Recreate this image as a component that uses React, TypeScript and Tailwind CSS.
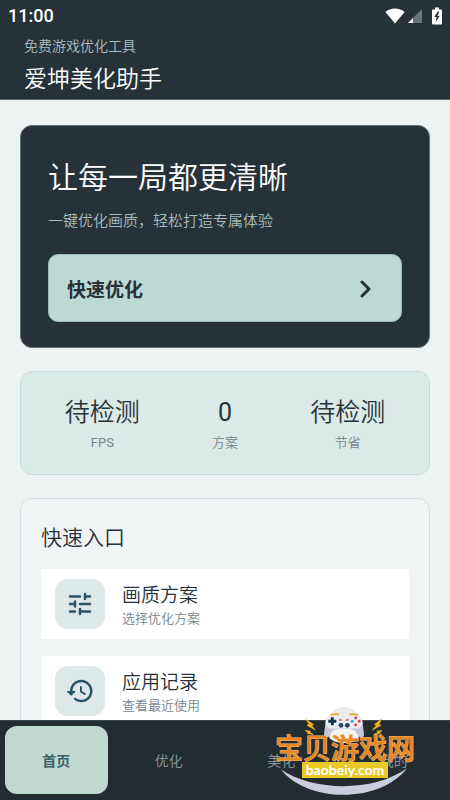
import type { ReactNode } from "react";

const stats = [
  { value: "待检测", label: "FPS", valueWeight: "font-[350]", labelWeight: "font-normal" },
  { value: "0", label: "方案", valueWeight: "font-normal", labelWeight: "font-[350]" },
  { value: "待检测", label: "节省", valueWeight: "font-[350]", labelWeight: "font-[350]" },
];

const tabs = ["首页", "优化", "美化", "我的"];

function WifiIcon() {
  return (
    <svg className="h-4 w-5" viewBox="0 0 20 16" aria-hidden="true">
      <path d="M10 15.5 0.4 4C3 1.7 6.3 0.5 10 0.5S17 1.7 19.6 4Z" fill="#fff" />
    </svg>
  );
}

function SignalIcon() {
  return (
    <svg className="h-4 w-4" viewBox="0 0 16 16" aria-hidden="true">
      <path d="M15 1v14H1Z" fill="#67747a" />
      <path d="M6 10v5H1Z" fill="#fff" />
    </svg>
  );
}

function BatteryIcon() {
  return (
    <svg className="h-[18px] w-[10px]" viewBox="0 0 10 18" aria-hidden="true">
      <path d="M3 0.5h4v2h2q1 0 1 1v13q0 1-1 1H1q-1 0-1-1v-13q0-1 1-1h2Z" fill="#fff" />
      <path d="M5.6 4.6 2.4 10h2.2l-.8 5L7.6 9H5.4l1.8-4.4Z" fill="#263238" />
    </svg>
  );
}

function TuneIcon() {
  return (
    <svg className="size-[30px]" viewBox="0 0 24 24" fill="none" stroke="currentColor" strokeWidth="2" strokeLinecap="round" aria-hidden="true">
      <path d="M4 6h8M16 4v4M16 6h4M4 12h4M8 10v4M12 12h8M4 18h4M12 16v4M12 18h8" />
    </svg>
  );
}

function HistoryIcon() {
  return (
    <svg className="size-[30px]" viewBox="0 0 24 24" fill="currentColor" aria-hidden="true">
      <path d="M13.26 3C8.17 2.86 4 6.95 4 12H2.21c-.45 0-.67.54-.35.85l2.79 2.8c.2.2.51.2.71 0l2.79-2.8c.31-.31.09-.85-.36-.85H6c0-3.9 3.18-7.05 7.1-7 3.72.05 6.85 3.18 6.9 6.9.05 3.91-3.1 7.1-7 7.1-1.61 0-3.1-.55-4.28-1.48-.4-.31-.96-.28-1.32.08-.42.42-.39 1.13.08 1.49C9 20.29 10.91 21 13 21c5.05 0 9.14-4.17 9-9.26-.13-4.69-4.05-8.61-8.74-8.74zm-.51 5c-.41 0-.75.34-.75.75v3.68c0 .35.19.68.49.86l3.12 1.85c.36.21.82.09 1.03-.26.21-.36.09-.82-.26-1.03l-2.88-1.71v-3.4c0-.4-.34-.74-.75-.74z" />
    </svg>
  );
}

function Entry({ icon, title, note }: { icon: ReactNode; title: string; note: string }) {
  return (
    <button type="button" className="flex h-[70px] w-full shrink-0 items-center gap-[17px] bg-white px-3.5 text-left">
      <span className="flex size-[50px] items-center justify-center rounded-[13px] bg-[#dce9e8] text-[#2a5464]">{icon}</span>
      <span className="flex flex-col pt-[2px]">
        <span className="text-[19px] leading-7 font-[350] text-[#263238]">{title}</span>
        <span className="text-[13px] leading-[18px] font-[350] text-[#77858b]">{note}</span>
      </span>
    </button>
  );
}

function ControllerLogo() {
  return (
    <svg className="block w-full" viewBox="0 0 138 92" aria-hidden="true">
      <circle cx="68" cy="19.500" r="16.500" fill="#ececec" />
      <ellipse cx="68" cy="32" rx="15" ry="7" fill="#f3f3f4" />
      <path d="M54 12.500q14-2.500 28 0 4 1 4.500 6L88 30q0 3.500-2.500 3.500T81 29.500Q79 25 74 25H62q-5 0-7 4.500-2 4-4.500 4T48 30l1.500-11.500q.5-5 4.500-6Z" fill="#c4c7d6" />
      <path d="M54 12q14-2.500 28 0 4 1 4.500 6 0 4-3.500 6.500H53q-3.500-2.500-3.500-6.500.5-5 4.500-6Z" fill="#ebebf2" />
      <path d="M54.500 11q4-1.500 8.500-.5M73.500 10.500q4.500-1 8.500.5" stroke="#e7a92c" strokeWidth="1.800" fill="none" />
      <path d="M56.300 13.300v8M52.300 17.300h8" stroke="#16394a" strokeWidth="3" />
      <circle cx="79.700" cy="13.800" r="1.500" fill="#d74a55" />
      <circle cx="79.700" cy="20.800" r="1.500" fill="#d74a55" />
      <circle cx="76.200" cy="17.300" r="1.500" fill="#39abc0" />
      <circle cx="83.200" cy="17.300" r="1.500" fill="#d74a55" />
      <path d="M63 16h2.600M70 16h2.600" stroke="#d74a55" strokeWidth="1.500" />
      <circle cx="65" cy="21.300" r="2.400" fill="#20495b" />
      <circle cx="71.300" cy="21.300" r="2.400" fill="#20495b" />
      <path d="m30 15.500 7.500 5-2 .8 3.500 4.500-8-4.500 2.300-1ZM29 26.500l5.500.7-.8 1.200 3.500 2-6-1 .8-1.300ZM105.500 15l-7 5.500 2 .8-4 4.500 8.500-4.500-2.300-1ZM106 26.500l-5 .7.8 1.200-3.500 2 6-1-.8-1.300Z" fill="#f1b321" stroke="#f1b321" strokeWidth="0.800" />
      <path d="M4.700 65.300C38 88 98 88 131 64.300C104 99.500 32 99.500 4.700 65.300Z" fill="#cccddc" />
    </svg>
  );
}

function Watermark() {
  return (
    <div className="pointer-events-none absolute right-9 bottom-1 w-[138px]">
      <ControllerLogo />
      <div className="absolute inset-x-0 top-[33px] flex flex-col items-center">
        <span className="text-[28px] leading-[25px] font-medium whitespace-nowrap text-[#e8871e] [-webkit-text-stroke:1px_#f0bd80] [paint-order:stroke_fill]">
          宝贝游戏网
        </span>
        <span className="flex h-4 w-[86px] items-center justify-center bg-[#e8c928] pb-px font-[Lato,sans-serif] text-[14px] leading-4 font-bold text-white">
          baobeiy.com
        </span>
      </div>
    </div>
  );
}

export default function App() {
  return (
    <div className="flex h-screen flex-col bg-[#edf3f3] font-[Roboto,'Noto_Sans_CJK_SC',sans-serif]">
      <header className="shrink-0 border-b border-[#53666b] bg-[#263238]">
        <div className="flex h-8 items-center justify-between px-2 text-white">
          <span className="text-[18px] leading-8 font-medium">11:00</span>
          <span className="flex items-center">
            <WifiIcon />
            <span className="mr-[9px] ml-[2px]">
              <SignalIcon />
            </span>
            <BatteryIcon />
          </span>
        </div>
        <div className="px-6 pt-1 pb-[3px]">
          <p className="text-[14px] leading-5 font-[350] text-[#a9bfbb]">免费游戏优化工具</p>
          <h1 className="mt-2 text-[23px] leading-8 font-[350] text-white">爱坤美化助手</h1>
        </div>
      </header>

      <main className="flex flex-1 flex-col gap-[23px] overflow-hidden px-5 pt-[25px]">
        <section className="shrink-0 rounded-xl border border-[#5b7476] bg-[#263238] px-[27px] pt-[30px] pb-[25px]">
          <h2 className="text-[30px] leading-[44px] font-[350] text-white">让每一局都更清晰</h2>
          <p className="mt-[9px] text-[15px] leading-6 font-[350] text-[#a9bfbb]">一键优化画质，轻松打造专属体验</p>
          <button type="button" className="mt-[21px] flex h-[68px] w-full items-center justify-between rounded-[10px] border border-[#9dbab5] bg-[#bdd9d3] pt-[2px] pr-[30px] pl-[18px] text-[19px] font-bold text-[#263238]">
            <span className="pt-1">快速优化</span>
            <svg className="h-[18px] w-3" viewBox="0 0 12 18" fill="none" stroke="currentColor" strokeWidth="3" strokeLinecap="round" strokeLinejoin="round" aria-hidden="true">
              <path d="M3 2l7 7-7 7" />
            </svg>
          </button>
        </section>

        <section className="grid shrink-0 grid-cols-3 rounded-xl border border-[#c8dbd8] bg-[#dceae7] px-5 pt-[23px] pb-[21px] text-center">
          {stats.map((item) => (
            <div key={item.label}>
              <p className={`text-[25px] leading-9 text-[#263238] ${item.valueWeight}`}>{item.value}</p>
              <p className={`mt-[2px] text-[13px] leading-5 text-[#77858b] ${item.labelWeight}`}>{item.label}</p>
            </div>
          ))}
        </section>

        <section className="flex shrink-0 flex-col rounded-xl border border-[#d3e0df] bg-[#f0f4f5] p-5">
          <h2 className="mb-[15px] pt-[3px] text-[21px] leading-8 font-[350] text-[#263238]">快速入口</h2>
          <div className="flex flex-col gap-[17px]">
            <Entry icon={<TuneIcon />} title="画质方案" note="选择优化方案" />
            <Entry icon={<HistoryIcon />} title="应用记录" note="查看最近使用" />
          </div>
        </section>
      </main>

      <nav className="relative grid h-20 shrink-0 grid-cols-4 border-t border-[#3b494e] bg-[#222c31] pt-[5px] pb-[6px]">
        {tabs.map((tab, index) => (
          <button
            key={tab}
            type="button"
            className={
              index === 0
                ? "mx-[5px] rounded-xl bg-[#c0d9d0] pt-[2px] text-[14px] font-bold text-[#36606b]"
                : "mx-[5px] rounded-xl pt-[2px] text-[14px] text-[#829196]"
            }
          >
            {tab}
          </button>
        ))}
        <Watermark />
      </nav>
    </div>
  );
}
